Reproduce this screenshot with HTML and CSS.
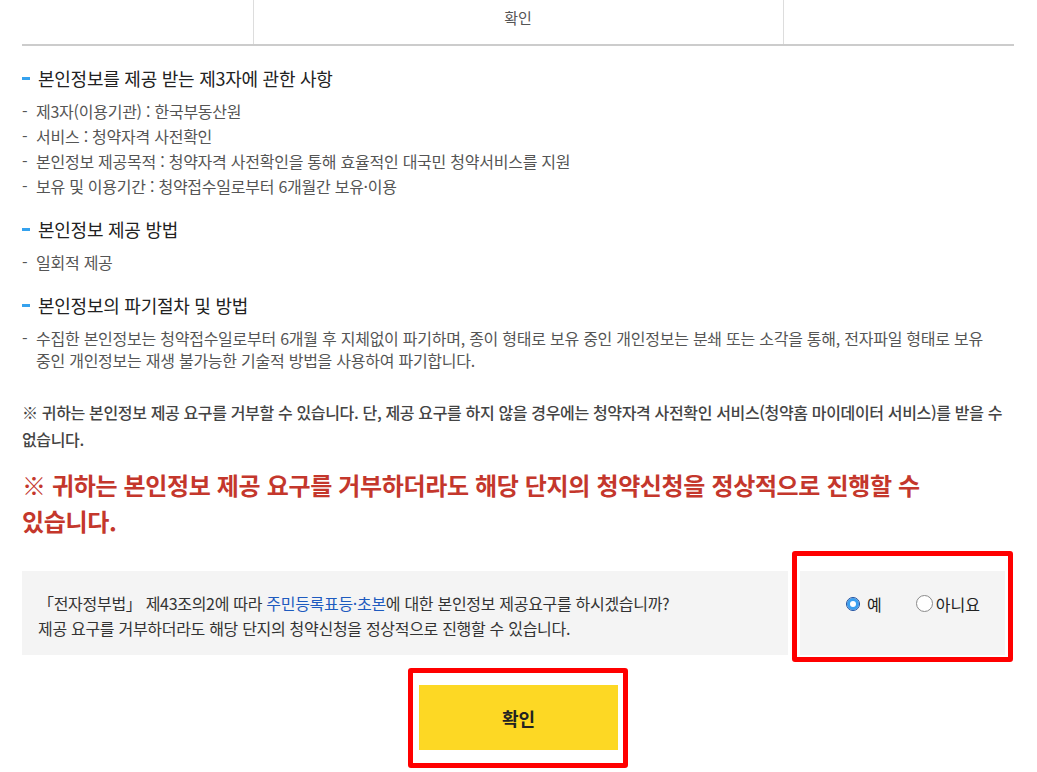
FILE: index.html
```html
<!DOCTYPE html>
<html lang="ko">
<head>
    <meta charset="UTF-8">
    <meta name="viewport" content="width=device-width, initial-scale=1.0">
    <title>본인정보 제공 동의</title>
    <link rel="stylesheet" href="styles.css">
</head>
<body>

<div class="container">
    <table class="top-table">
        <tr>
            <td></td>
            <td>확인</td>
            <td></td>
        </tr>
    </table>

    <div class="section">
        <h3>본인정보를 제공 받는 제3자에 관한 사항</h3>
        <ul>
            <li>제3자(이용기관) : 한국부동산원</li>
            <li>서비스 : 청약자격 사전확인</li>
            <li>본인정보 제공목적 : 청약자격 사전확인을 통해 효율적인 대국민 청약서비스를 지원</li>
            <li>보유 및 이용기간 : 청약접수일로부터 6개월간 보유·이용</li>
        </ul>
    </div>

    <div class="section">
        <h3>본인정보 제공 방법</h3>
        <ul>
            <li>일회적 제공</li>
        </ul>
    </div>

    <div class="section">
        <h3>본인정보의 파기절차 및 방법</h3>
        <ul>
            <li>수집한 본인정보는 청약접수일로부터 6개월 후 지체없이 파기하며, 종이 형태로 보유 중인 개인정보는 분쇄 또는 소각을 통해, 전자파일 형태로 보유<br>중인 개인정보는 재생 불가능한 기술적 방법을 사용하여 파기합니다.</li>
        </ul>
    </div>

    <p class="note">※ 귀하는 본인정보 제공 요구를 거부할 수 있습니다. 단, 제공 요구를 하지 않을 경우에는 청약자격 사전확인 서비스(청약홈 마이데이터 서비스)를 받을 수 없습니다.</p>

    <p class="warn">※ 귀하는 본인정보 제공 요구를 거부하더라도 해당 단지의 청약신청을 정상적으로 진행할 수 있습니다.</p>

    <div class="agree-box">
        <div class="agree-text">
            「전자정부법」 제43조의2에 따라 <span class="link">주민등록표등·초본</span>에 대한 본인정보 제공요구를 하시겠습니까?<br>
            제공 요구를 거부하더라도 해당 단지의 청약신청을 정상적으로 진행할 수 있습니다.
        </div>
        <div class="agree-choice marked">
            <label class="radio"><input type="radio" name="agree" class="focused" checked>예</label>
            <label class="radio"><input type="radio" name="agree">아니요</label>
        </div>
    </div>

    <div class="btn-area">
        <button class="btn-ok">확인</button>
    </div>
</div>

</body>
</html>
```

FILE: styles.css
```css
body {
    font-family: "Noto Sans CJK KR", "Noto Sans", sans-serif;
    margin: 0;
    padding: 0;
    background: #fff;
    color: #555;
    word-break: keep-all;
}
.container {
    padding: 0 23px 30px 22px;
}
.top-table {
    width: 100%;
    border-collapse: collapse;
    border-bottom: 2px solid #ccc;
}
.top-table td {
    height: 45px;
    padding: 0 0 10px;
    text-align: center;
    font-size: 15px;
    color: #555;
    border-left: 1px solid #ddd;
    box-sizing: border-box;
}
.top-table td:first-child {
    border-left: none;
    width: 231px;
}
.top-table td:nth-child(2) {
    width: 530px;
}
.section {
    margin-top: 20px;
}
.section h3 {
    position: relative;
    margin: 0;
    padding-left: 16px;
    font-size: 18px;
    font-weight: 400;
    line-height: 24px;
    color: #222;
    letter-spacing: -0.25px;
}
.section h3::before {
    content: "";
    position: absolute;
    left: 0;
    top: 11px;
    width: 8px;
    height: 3px;
    background: #35a2ee;
}
.section ul {
    list-style: none;
    margin: 10px 0 0;
    padding: 0;
}
.section li {
    position: relative;
    padding-left: 14px;
    font-size: 16px;
    line-height: 22px;
    margin-bottom: 3px;
    letter-spacing: -0.25px;
}
.section li:last-child {
    margin-bottom: 0;
}
.section li::before {
    content: "-";
    position: absolute;
    left: 0;
    top: 0;
}
.note {
    margin: 28px 0 0;
    font-size: 16px;
    font-weight: 500;
    line-height: 27px;
    color: #444;
    letter-spacing: -0.35px;
}
.warn {
    margin: 14px 0 0;
    font-size: 24px;
    font-weight: 700;
    line-height: 36px;
    color: #c4372c;
    letter-spacing: -0.35px;
}
.agree-box {
    display: flex;
    margin-top: 32px;
    height: 84px;
}
.agree-text {
    width: 766px;
    box-sizing: border-box;
    padding: 20px 16px 0;
    background: #f4f4f4;
    font-size: 16px;
    line-height: 25px;
    color: #333;
    letter-spacing: -0.3px;
}
.link {
    color: #1e5bbf;
}
.agree-choice {
    position: relative;
    width: 205px;
    margin-left: 12px;
    padding: 20px 0 0 46px;
    box-sizing: border-box;
    background: #f4f4f4;
    display: flex;
    align-items: flex-start;
    gap: 34px;
}
.radio {
    display: flex;
    align-items: center;
    height: 25px;
    font-size: 16px;
    color: #222;
}
.radio input {
    appearance: none;
    width: 17px;
    height: 17px;
    margin: 0 3px 0 0;
    border: 1px solid #8a8a8a;
    border-radius: 50%;
    background: #fff;
    box-sizing: border-box;
}
.radio input:checked {
    width: 12px;
    height: 12px;
    margin: 0 8px 0 1px;
    border: 3.5px solid #3a9ff0;
}
.radio input.focused {
    outline: 1px solid #1b4ea0;
    outline-offset: 0;
}
.marked::after,
.btn-area::after {
    content: "";
    position: absolute;
    border: 5px solid #ff0000;
    border-radius: 3px;
    pointer-events: none;
}
.agree-choice.marked::after {
    top: -20px;
    bottom: -7px;
    left: -8px;
    right: -8px;
}
.btn-area {
    position: relative;
    width: 199px;
    margin: 30px auto 0;
    left: 0.5px;
}
.btn-area::after {
    top: -17px;
    bottom: -18px;
    left: -11px;
    right: -10px;
}
.btn-ok {
    display: block;
    width: 199px;
    height: 65px;
    border: none;
    background: #fdd824;
    font-family: inherit;
    font-size: 18px;
    font-weight: 700;
    color: #222;
    cursor: pointer;
}
```
